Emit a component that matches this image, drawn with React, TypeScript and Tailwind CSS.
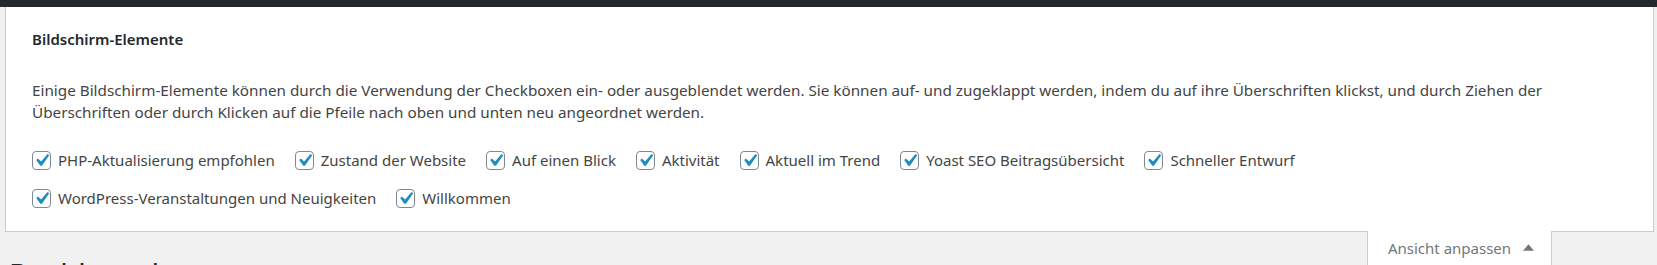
import React from 'react'

const rowOne = [
  'PHP-Aktualisierung empfohlen',
  'Zustand der Website',
  'Auf einen Blick',
  'Aktivität',
  'Aktuell im Trend',
  'Yoast SEO Beitragsübersicht',
  'Schneller Entwurf',
]

const rowTwo = ['WordPress-Veranstaltungen und Neuigkeiten', 'Willkommen']

const CheckItem = ({ label }: { label: string }) => (
  <label className="flex items-center gap-[7px] mr-[20px]">
    <span className="relative w-[19px] h-[19px] rounded-[4px] border border-[#7e8993] bg-white shrink-0">
      <svg
        viewBox="0 0 20 20"
        className="absolute -left-[4px] -top-[4px] w-[25px] h-[25px]"
      >
        <path
          d="M14.83 4.89l1.34.94-5.81 8.38H9.02L5.78 9.67l1.34-1.25 2.57 2.4z"
          fill="#1e8cbe"
        />
      </svg>
    </span>
    <span>{label}</span>
  </label>
)

export default function App() {
  return (
    <div
      className="h-[265px] overflow-hidden bg-[#f1f1f1] text-[#444]"
      style={{ fontFamily: '"Noto Sans", "Open Sans", sans-serif' }}
    >
      <div className="h-[7px] bg-[#23282d]" />

      <div className="ml-[5px] mr-[3px] bg-white border-x border-b border-[#ccc] pl-[26px] pr-4 pt-[21px] pb-[14px] text-[15px] leading-[22px]">
        <h5 className="font-semibold text-[#23282d]">Bildschirm-Elemente</h5>
        <p className="mt-[29px] text-[15.25px]">
          Einige Bildschirm-Elemente können durch die Verwendung der Checkboxen ein- oder ausgeblendet werden. Sie können auf- und zugeklappt werden, indem du auf ihre Überschriften klickst, und durch Ziehen der
          <br />
          Überschriften oder durch Klicken auf die Pfeile nach oben und unten neu angeordnet werden.
        </p>
        <div className="mt-[18px]">
          <div className="flex items-center h-[38px]">
            {rowOne.map((l) => (
              <CheckItem key={l} label={l} />
            ))}
          </div>
          <div className="flex items-center h-[38px]">
            {rowTwo.map((l) => (
              <CheckItem key={l} label={l} />
            ))}
          </div>
        </div>
      </div>

      <div className="flex items-start justify-between">
        <h1 className="ml-[9px] mt-[24px] text-[29px] leading-[36px] text-[#23282d]">Dashboard</h1>
        <div className="-mt-px mr-[105px] w-[185px] h-[40px] bg-white border-x border-[#ccc] flex items-start justify-center pt-[6px] gap-[12px] pl-[3px] text-[15px] text-[#72777c]">
          <span>Ansicht anpassen</span>
          <svg viewBox="0 0 10 10" className="w-[11px] h-[11px] mt-[5px]">
            <path d="M0 8 L5 2 L10 8 Z" fill="#72777c" />
          </svg>
        </div>
      </div>
    </div>
  )
}
